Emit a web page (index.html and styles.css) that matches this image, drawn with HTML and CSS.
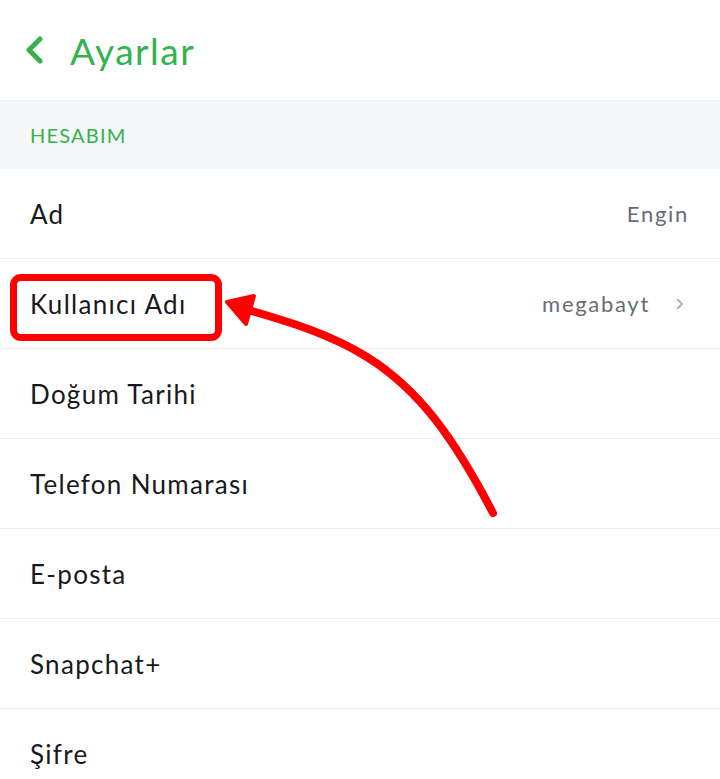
FILE: index.html
```html
<!DOCTYPE html>
<html lang="tr">
<head>
<meta charset="utf-8">
<link rel="stylesheet" href="styles.css">
</head>
<body>
<div class="screen">
  <header class="topbar">
    <svg class="back" width="20" height="28" viewBox="0 0 20 28"><path d="M16 3 L5 14 L16 25" fill="none" stroke="#33b24f" stroke-width="5" stroke-linecap="round" stroke-linejoin="round"/></svg>
    <h1 class="title">Ayarlar</h1>
  </header>
  <div class="section">HESABIM</div>
  <ul class="list">
    <li class="row"><span class="label">Ad</span><span class="value">Engin</span></li>
    <li class="row"><span class="label">Kullanıcı Adı</span><span class="value">megabayt<svg class="chev" width="10" height="14" viewBox="0 0 10 14"><path d="M3 3 L7 7 L3 11" fill="none" stroke="#b4b8bc" stroke-width="2.4" stroke-linecap="round" stroke-linejoin="round"/></svg></span></li>
    <li class="row"><span class="label">Doğum Tarihi</span></li>
    <li class="row"><span class="label">Telefon Numarası</span></li>
    <li class="row"><span class="label">E-posta</span></li>
    <li class="row"><span class="label">Snapchat+</span></li>
    <li class="row"><span class="label">Şifre</span></li>
  </ul>
  <div class="mark-box"></div>
  <svg class="arrow" width="720" height="779" viewBox="0 0 720 779">
    <path d="M493 513 C 455 440, 420 390, 367 357 C 330 334, 290 322, 245 309" fill="none" stroke="#ff0000" stroke-width="8" stroke-linecap="round"/>
    <path d="M227 302 L254 296 L246 324 Z" fill="#ff0000" stroke="#ff0000" stroke-width="4" stroke-linejoin="round"/>
  </svg>
</div>
</body>
</html>
```
FILE: styles.css
```css
* { box-sizing: border-box; }
html, body { margin: 0; padding: 0; background: #fff; }
body { font-family: Lato, "Open Sans", "Liberation Sans", sans-serif; }
.screen { position: relative; width: 720px; height: 779px; overflow: hidden; background: #fff; }
.topbar { height: 100px; display: flex; align-items: center; padding: 0 0 0 24px; gap: 26px; }
.title { margin: 0; font-weight: 400; font-size: 37px; color: #33b24f; letter-spacing: 1.5px; }
.section { height: 69px; background: #f6f7f8; border-top: 1px solid #f0f1f2; display: flex; align-items: center; padding-left: 30px; font-size: 20px; color: #33b24f; letter-spacing: 1.2px; }
.list { list-style: none; margin: 0; padding: 0; }
.row { height: 90px; display: flex; align-items: center; justify-content: space-between; padding: 0 31px 0 30px; border-bottom: 1px solid #eef0f1; }
.label { font-size: 26px; color: #17191b; letter-spacing: 1.3px; }
.value { font-size: 22px; color: #676d73; display: flex; align-items: center; gap: 25px; letter-spacing: 1.7px; }
.chev { margin-right: 4px; }
.mark-box { position: absolute; left: 10px; top: 274px; width: 212px; height: 67px; border: 7px solid #ff0000; border-radius: 11px; }
.arrow { position: absolute; left: 0; top: 0; }
```
